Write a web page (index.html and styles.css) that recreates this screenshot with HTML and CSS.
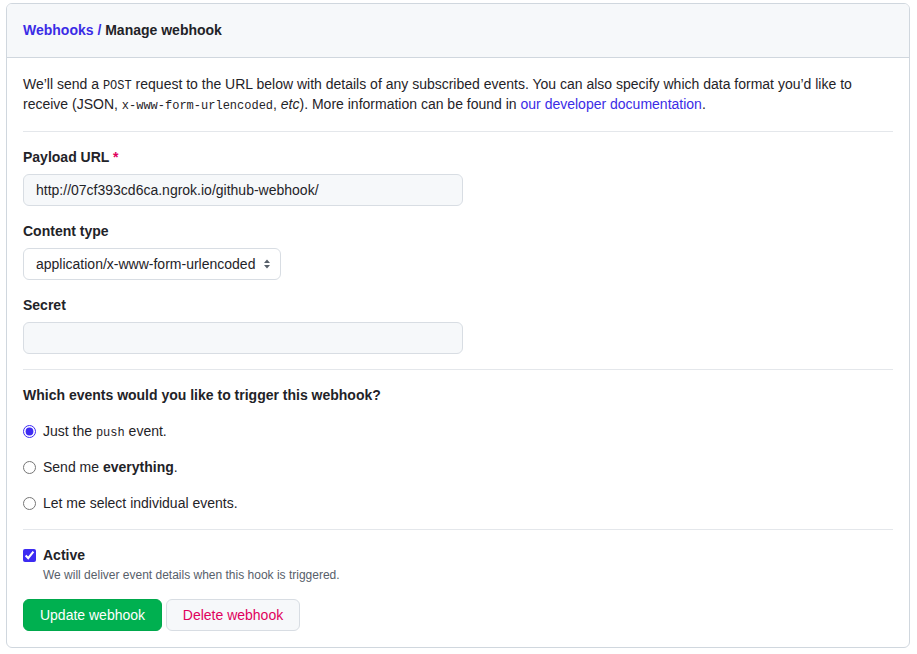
FILE: index.html
```html
<!DOCTYPE html>
<html>
<head>
<meta charset="utf-8">
<link rel="stylesheet" href="styles.css">
</head>
<body>
<div class="box">
  <div class="box-header">
    <h2 class="title"><a href="#" class="crumb">Webhooks</a><span class="sep"> / </span>Manage webhook</h2>
  </div>
  <div class="box-body">
    <p class="intro">We’ll send a <code>POST</code> request to the URL below with details of any subscribed events. You can also specify which data format you’d like to receive (JSON, <code>x-www-form-urlencoded</code>, <em>etc</em>). More information can be found in <a href="#" class="link">our developer documentation</a>.</p>
    <hr class="divider">
    <div class="group">
      <label class="label">Payload URL <span class="req">*</span></label>
      <input class="input" type="text" value="http://07cf393cd6ca.ngrok.io/github-webhook/">
    </div>
    <div class="group">
      <label class="label">Content type</label>
      <div class="select">
        <span class="select-text">application/x-www-form-urlencoded</span>
        <svg class="caret" width="8" height="12" viewBox="0 0 8 12"><path d="M4 1.5L7 5H1z" fill="#57606a"/><path d="M4 10.5L1 7h6z" fill="#57606a"/></svg>
      </div>
    </div>
    <div class="group">
      <label class="label">Secret</label>
      <input class="input" type="text" value="">
    </div>
    <hr class="divider d2">
    <h3 class="question">Which events would you like to trigger this webhook?</h3>
    <div class="radios">
      <label class="radio"><input type="radio" name="ev" checked><span>Just the <code>push</code> event.</span></label>
      <label class="radio"><input type="radio" name="ev"><span>Send me <strong>everything</strong>.</span></label>
      <label class="radio"><input type="radio" name="ev"><span>Let me select individual events.</span></label>
    </div>
    <hr class="divider d3">
    <div class="active">
      <label class="check"><input type="checkbox" checked><span>Active</span></label>
      <p class="note">We will deliver event details when this hook is triggered.</p>
    </div>
    <div class="actions">
      <button class="btn btn-primary">Update webhook</button>
      <button class="btn btn-danger">Delete webhook</button>
    </div>
  </div>
</div>
</body>
</html>
```

FILE: styles.css
```css
* { box-sizing: border-box; }
html, body { margin: 0; background: #fff; }
body {
  padding: 3px 7px 0 6px;
  font-family: "Liberation Sans", Arial, sans-serif;
  font-size: 14px;
  line-height: 20px;
  color: #1f2328;
}
.box {
  border: 1px solid #d0d7de;
  border-radius: 6px;
  overflow: hidden;
}
.box-header {
  background: #f6f8fa;
  border-bottom: 1px solid #d0d7de;
  padding: 16px;
  height: 54px;
}
.title {
  margin: 0;
  font-size: 14px;
  font-weight: 700;
  line-height: 20px;
}
.crumb, .link, .sep { color: #3b2ce6; text-decoration: none; }
.box-body { padding: 16px; }
.intro { margin: 0; }
code {
  font-family: "Liberation Mono", "DejaVu Sans Mono", monospace;
  font-size: 12px;
  line-height: 1;
}
.divider {
  border: 0;
  border-top: 1px solid #e4e7eb;
  margin: 17px 0 15px;
  height: 0;
}
.group { margin-bottom: 15px; }
.label {
  display: block;
  font-weight: 700;
  margin-bottom: 7px;
}
.req { color: #e0005c; }
.input {
  display: block;
  width: 440px;
  height: 32px;
  padding: 5px 12px;
  font: inherit;
  color: #1f2328;
  background: #f6f8fa;
  border: 1px solid #d8dde3;
  border-radius: 6px;
  outline: none;
}
.select {
  display: flex;
  align-items: center;
  width: 258px;
  height: 32px;
  padding: 0 9px 0 12px;
  background: #fff;
  border: 1px solid #d8dde3;
  border-radius: 6px;
  white-space: nowrap;
}
.select-text { flex: none; }
.caret { margin-left: auto; flex: none; }
.d2 { margin: 0 0 15px; }
.question {
  margin: 0 0 16px;
  font-size: 14px;
  font-weight: 700;
  line-height: 20px;
}
.radios { display: flex; flex-direction: column; gap: 16px; }
.radio {
  display: flex;
  align-items: center;
  gap: 7px;
}
.radio input, .check input {
  margin: 0;
  width: 13px;
  height: 13px;
  flex: none;
  accent-color: #3d2bf2;
}
.d3 { margin: 16px 0 15px; }
.check {
  display: flex;
  align-items: center;
  gap: 7px;
  font-weight: 700;
}
.note {
  margin: 0 0 0 20px;
  font-size: 12px;
  line-height: 20px;
  color: #57606a;
}
.actions {
  display: flex;
  gap: 4px;
  margin-top: 14px;
}
.btn {
  height: 32px;
  padding: 0 8px;
  font: inherit;
  border-radius: 6px;
  cursor: pointer;
  white-space: nowrap;
}
.btn-primary {
  width: 139px;
  background: #00b050;
  color: #fff;
  border: 1px solid #00a84c;
}
.btn-danger {
  width: 134px;
  background: #f6f8fa;
  color: #e0005c;
  border: 1px solid #d8dde3;
}
```
